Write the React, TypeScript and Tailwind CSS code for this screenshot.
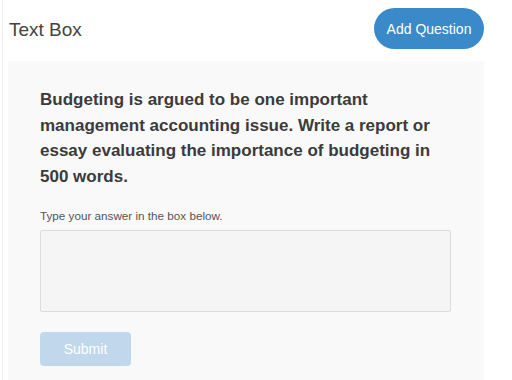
export default function App() {
  return (
    <div className="w-[512px] h-[380px] overflow-hidden bg-white font-['Liberation_Sans',Arial,sans-serif] pl-[2px]">
      <div className="border-l border-[#f0f0f0] h-full">
        <div className="flex items-center justify-between pl-[6px] pr-[28px] pt-[8px] h-[61px] pb-[12px]">
          <h1 className="text-[19px] text-[#444] font-normal leading-none mt-[2px]">Text Box</h1>
          <button className="w-[110px] h-[41px] rounded-full bg-[#3a89c9] text-white text-[14px] leading-none">
            Add Question
          </button>
        </div>
        <div className="ml-[5px] w-[476px] bg-[#f9f9f9] rounded-t-[3px] pl-[32px] pt-[26px] pb-[20px] h-[319px]">
          <p className="text-[17px] leading-[25.5px] font-bold text-[#3b3b3b] w-[420px]">
            Budgeting is argued to be one important management accounting issue. Write a report or essay evaluating the importance of budgeting in 500 words.
          </p>
          <p className="mt-[20px] text-[11.7px] leading-[14px] text-[#555]">Type your answer in the box below.</p>
          <textarea className="mt-[7px] block w-[411px] h-[82px] bg-[#f5f5f5] border border-[#dcdcdc] rounded-[2px] resize-none outline-none" />
          <button className="mt-[20px] w-[91px] h-[34px] rounded-[4px] bg-[#c0d7ec] text-white text-[14px] leading-none">
            Submit
          </button>
        </div>
      </div>
    </div>
  );
}
